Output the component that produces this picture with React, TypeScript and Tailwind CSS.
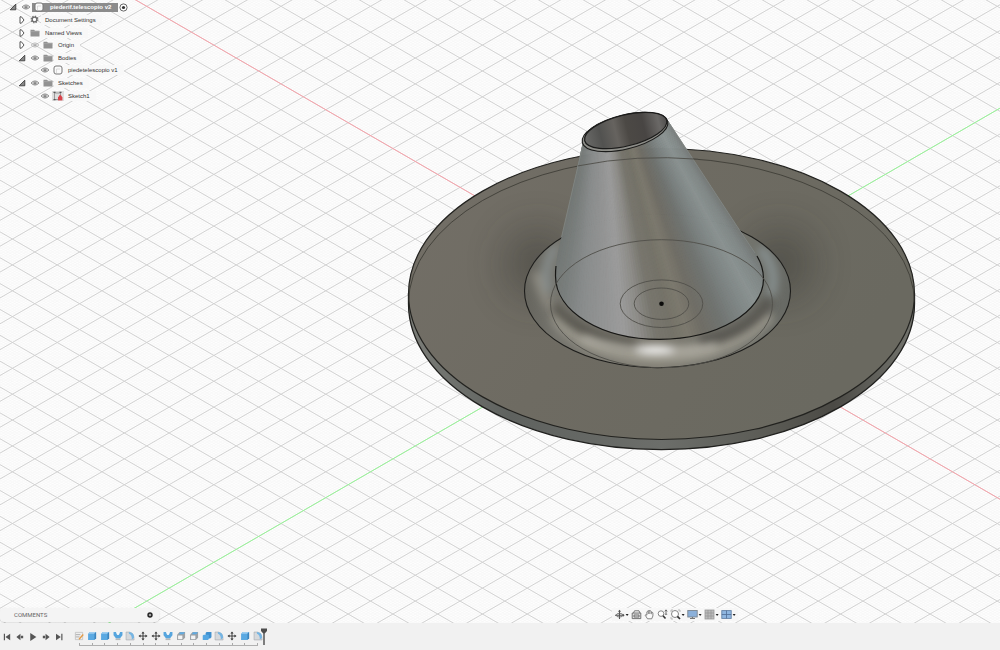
import { useState } from 'react';
import type { ReactNode } from 'react';

const W = 1000;
const H = 623;
const CX = 661.5;
const CY = 303.7;
const ISO = 0.5777;
const MAJOR = 25.86;

/* ---------- GRID ---------- */

// both line families of the ground plane, step = vertical distance between lines
const gridPath = (step: number) => {
  let d = '';
  const reach = Math.ceil((H + W * ISO) / step) + 2;
  for (let k = -reach; k <= reach; k++) {
    for (const s of [ISO, -ISO]) {
      const y0 = CY - s * CX + k * step;
      const y1 = y0 + s * W;
      if (Math.max(y0, y1) < 0 || Math.min(y0, y1) > H) continue;
      d += `M0 ${y0.toFixed(2)}L${W} ${y1.toFixed(2)}`;
    }
  }
  return d;
};

const minorGrid = gridPath(MAJOR / 10);
const majorGrid = gridPath(MAJOR);

/* ---------- CONE ---------- */

const coneStops: [number, number[]][] = [
  [0, [114, 118, 116]],
  [0.07, [122, 127, 125]],
  [0.15, [138, 141, 141]],
  [0.23, [147, 148, 148]],
  [0.3, [156, 156, 156]],
  [0.36, [142, 141, 137]],
  [0.42, [120, 118, 110]],
  [0.48, [117, 115, 105]],
  [0.54, [124, 121, 110]],
  [0.6, [112, 110, 102]],
  [0.68, [112, 115, 112]],
  [0.77, [126, 133, 132]],
  [0.86, [139, 147, 146]],
  [0.94, [129, 136, 135]],
  [1, [116, 120, 117]],
];

const coneColor = (t: number) => {
  const i = Math.max(1, coneStops.findIndex(([p]) => p >= t));
  const [p0, a] = coneStops[i - 1];
  const [p1, b] = coneStops[i];
  const f = (t - p0) / (p1 - p0);
  return `rgb(${a.map((v, j) => Math.round(v + (b[j] - v) * f)).join(',')})`;
};

const conePoint = (t: number, ext: number) => {
  const px = 581 + 88 * t;
  const py = 146 - 27 * t;
  const bx = 555 + 209 * t;
  return `${(px + (bx - px) * ext).toFixed(1)},${(py + (265 - py) * ext).toFixed(1)}`;
};

const SLICES = 90;
const coneSlices = Array.from({ length: SLICES }, (_, i) => {
  const a = i / SLICES;
  const b = (i + 1) / SLICES;
  return {
    points: `${conePoint(a, -0.3)} ${conePoint(b, -0.3)} ${conePoint(b, 1.8)} ${conePoint(a, 1.8)}`,
    color: coneColor((a + b) / 2),
  };
});

const CONE_OUTLINE =
  'M582.7 143L561.5 237C558 251 555.5 262 555.5 276C555.5 312 602 339.3 659.5 339.3C717 339.3 763.5 312 763.5 279C763.5 270 760 261 755 253L739.5 230L691.7 157L667.5 120Z';

function Viewport() {
  return (
    <svg
      className="absolute inset-0 h-full w-full"
      viewBox={`0 0 ${W} ${H}`}
      preserveAspectRatio="xMidYMid slice"
      role="img"
      aria-label="3D model viewport"
    >
      <defs>
        <linearGradient id="face" x1="0" y1="0" x2="1" y2="0.4">
          <stop offset="0" stopColor="#736f67" />
          <stop offset="0.5" stopColor="#6e6b62" />
          <stop offset="1" stopColor="#6a6960" />
        </linearGradient>
        <linearGradient id="side" x1="0" y1="0" x2="1" y2="0">
          <stop offset="0" stopColor="#7b7d78" />
          <stop offset="0.2" stopColor="#5f625f" />
          <stop offset="0.5" stopColor="#6c6e6a" />
          <stop offset="0.72" stopColor="#5a5a54" />
          <stop offset="0.84" stopColor="#4b4a45" />
          <stop offset="1" stopColor="#74756f" />
        </linearGradient>
        <linearGradient id="ring" x1="0" y1="0" x2="1" y2="0">
          <stop offset="0" stopColor="#66655e" />
          <stop offset="0.12" stopColor="#75746d" />
          <stop offset="0.5" stopColor="#7f7c72" />
          <stop offset="0.85" stopColor="#72736c" />
          <stop offset="1" stopColor="#666863" />
        </linearGradient>
        <linearGradient id="bore" x1="0" y1="0" x2="1" y2="0">
          <stop offset="0" stopColor="#6a6a68" />
          <stop offset="0.2" stopColor="#525250" />
          <stop offset="0.38" stopColor="#66635f" />
          <stop offset="0.52" stopColor="#4c4945" />
          <stop offset="0.72" stopColor="#484543" />
          <stop offset="0.9" stopColor="#6a6866" />
          <stop offset="1" stopColor="#4f4e4d" />
        </linearGradient>
        <filter id="soft" filterUnits="userSpaceOnUse" x="500" y="200" width="320" height="200">
          <feGaussianBlur stdDeviation="4" />
        </filter>
        <filter id="shade" filterUnits="userSpaceOnUse" x="400" y="140" width="520" height="320">
          <feGaussianBlur stdDeviation="19" />
        </filter>
        <clipPath id="faceClip"><ellipse cx="661.5" cy="294" rx="253" ry="145.5" /></clipPath>
        <clipPath id="ringClip"><ellipse cx="657.5" cy="291" rx="133" ry="76.7" /></clipPath>
        <clipPath id="coneClip">
          <path d={CONE_OUTLINE} />
          <ellipse cx="625" cy="132" rx="44" ry="17" transform="rotate(-14 625 132)" />
        </clipPath>
      </defs>

      <rect width={W} height={H} fill="#fefefe" />
      <path d={minorGrid} stroke="#f5f5f5" strokeWidth="0.6" fill="none" />
      <path d={majorGrid} stroke="#d2d2d2" strokeWidth="1" fill="none" />
      <path d={`M${CX} ${CY}L0 ${CY - CX * ISO}M${CX} ${CY}L${W} ${CY + (W - CX) * ISO}`} stroke="#f9a3ab" />
      <path d={`M${CX} ${CY}L0 ${CY + CX * ISO}M${CX} ${CY}L${W} ${CY - (W - CX) * ISO}`} stroke="#97f797" />

      {/* base disc */}
      <path
        d="M408.5 294V303.7A253 146 0 0 0 914.5 303.7V294Z"
        fill="url(#side)"
        stroke="#20201e"
        strokeWidth="1.3"
      />
      <ellipse cx="661.5" cy="294" rx="253" ry="145.5" fill="url(#face)" stroke="#22221f" strokeWidth="1.2" />
      <g clipPath="url(#faceClip)">
        <ellipse cx="538" cy="264" rx="34" ry="36" fill="#33322d" opacity="0.4" filter="url(#shade)" />
        <ellipse cx="780" cy="264" rx="34" ry="36" fill="#33322d" opacity="0.4" filter="url(#shade)" />
        <ellipse cx="661.5" cy="303.7" rx="253" ry="146" fill="none" stroke="#3f3e38" strokeWidth="0.9" />
      </g>

      {/* fillet around the cone */}
      <ellipse cx="657.5" cy="291" rx="133" ry="76.7" fill="url(#ring)" />
      <g clipPath="url(#ringClip)" fill="none">
        <g filter="url(#soft)">
          <path d="M536 272Q542 304 575 335" stroke="#8f8c82" strokeWidth="8" />
          <path d="M556 246Q541 268 549 292" stroke="#858b8a" strokeWidth="9" />
          <path d="M760 248Q780 272 770 296" stroke="#879090" strokeWidth="9" />
          <path d="M556 316C572 342 615 357 660 357S744 343 770 314" stroke="#99968b" strokeWidth="13" />
        </g>
        <g filter="url(#soft)">
          <path d="M554 305C574 330 608 342 636 344" stroke="#55524c" strokeWidth="9" />
          <path d="M770 300C752 326 728 336 700 341" stroke="#575550" strokeWidth="11" />
        </g>
        <g filter="url(#soft)">
          <path d="M582 338Q620 351 662 351T716 345" stroke="#b5b2a9" strokeWidth="6" />
          <ellipse cx="655" cy="350" rx="19" ry="4" fill="#ffffff" />
        </g>
      </g>
      <ellipse cx="657.5" cy="291" rx="133" ry="76.7" fill="none" stroke="#1d1d1b" strokeWidth="1.1" />

      {/* cone */}
      <g clipPath="url(#coneClip)">
        {coneSlices.map((s, i) => (
          <polygon key={i} points={s.points} fill={s.color} stroke={s.color} strokeWidth="0.8" />
        ))}
      </g>
      <path d="M582.7 146L561.5 237" stroke="#858985" strokeWidth="0.7" fill="none" />
      <path d="M667.8 121L691.7 157L739.5 230L755 253" stroke="#858b88" strokeWidth="0.7" fill="none" />
      <path
        d="M556 266C555.5 270 555.5 272 555.5 276C555.5 312 602 339.3 659.5 339.3C717 339.3 763.5 312 763.5 279C763.5 270 760 261 757 256"
        stroke="#171715"
        strokeWidth="1.2"
        fill="none"
      />
      <ellipse cx="625" cy="132" rx="44" ry="17" transform="rotate(-14 625 132)" fill="#8d8d88" stroke="#1b1b1a" strokeWidth="1.1" />
      <ellipse cx="625.7" cy="130.5" rx="42.3" ry="15.5" transform="rotate(-14 625.7 130.5)" fill="url(#bore)" stroke="#1b1b1a" strokeWidth="1.2" />

      {/* sketch curves showing through the body */}
      <g fill="none" stroke="#504f49" strokeWidth="0.9">
        <path d="M578 165.9A253 146 0 0 1 698 159.2" />
        <ellipse cx={CX} cy={CY} rx="111" ry="64" />
        <ellipse cx={CX} cy={CY} rx="41.3" ry="23.8" />
        <ellipse cx={CX} cy={CY} rx="27.3" ry="15.7" />
      </g>
      <circle cx={CX} cy={CY} r="2.3" fill="#0c0c0b" />
    </svg>
  );
}

/* ---------- BROWSER TREE ICONS ---------- */

const Arrow = ({ open }: { open: boolean }) => (
  <svg viewBox="0 0 8 8" className="h-2 w-2">
    {open ? (
      <path d="M6.8 1.2V6.8H1.2Z" fill="#888" stroke="#333" strokeWidth="0.8" />
    ) : (
      <path d="M2 0.8V7.2L3.4 7.2L6 4L3.4 0.8Z" fill="#fff" stroke="#444" strokeWidth="0.9" />
    )}
  </svg>
);

const Eye = ({ off }: { off?: boolean }) => (
  <svg viewBox="0 0 10 8" className={off ? 'h-2 w-[10px] opacity-50' : 'h-2 w-[10px]'}>
    <path d="M1 4Q5 -0.2 9 4Q5 8.2 1 4Z" fill="#e2e2e2" stroke="#888" strokeWidth="0.9" />
    <circle cx="5" cy="4" r="1.6" fill="#7c7c7c" />
    <circle cx="5" cy="3.8" r="0.5" fill="#ddd" />
  </svg>
);

const Folder = () => (
  <svg viewBox="0 0 10 8" className="h-2 w-[10px]">
    <path d="M0.5 0.8H4L5 1.8H9.5V7.6H0.5Z" fill="#929292" />
    <path d="M0.5 2.6H9.5" stroke="#b5b5b5" strokeWidth="0.5" />
  </svg>
);

const Gear = () => (
  <svg viewBox="0 0 10 10" className="h-[9px] w-[9px]">
    <circle cx="5" cy="5" r="3.7" fill="none" stroke="#777" strokeWidth="1.4" strokeDasharray="1.5 1.4" />
    <circle cx="5" cy="5" r="2.6" fill="#fff" stroke="#6c6c6c" strokeWidth="1.5" />
  </svg>
);

const BodyIcon = () => (
  <svg viewBox="0 0 10 10" className="h-[10px] w-[10px]">
    <rect x="1" y="1" width="8" height="8" rx="2" fill="#fafafa" stroke="#777" />
    <path d="M3.5 8V4H7" fill="none" stroke="#ccc" strokeWidth="0.7" />
  </svg>
);

const SketchIcon = () => (
  <svg viewBox="0 0 12 10" className="h-[10px] w-3 bg-[#dedede]">
    <path d="M2.5 1.5V8.5H6M2.5 2H8.5V5" fill="none" stroke="#8a8a8a" strokeWidth="0.8" />
    <path d="M1.5 1.3H3.5M7.5 1.3H9.5M1.5 8.7H3.5" stroke="#555" strokeWidth="1.2" />
    <path d="M6 6H10.4V9.4H6Z" fill="#d8434a" />
    <path d="M7 6V5Q8.2 3.4 9.4 5V6" fill="#d8434a" stroke="#d8434a" strokeWidth="0.6" />
  </svg>
);

type TreeRow = { label: string; indent: string; icons: ReactNode[] };

const rows: TreeRow[] = [
  { label: 'Document Settings', indent: 'ml-[15px]', icons: [<Arrow open={false} />, <Gear />] },
  { label: 'Named Views', indent: 'ml-[15px]', icons: [<Arrow open={false} />, <Folder />] },
  { label: 'Origin', indent: 'ml-[15px]', icons: [<Arrow open={false} />, <Eye off />, <Folder />] },
  { label: 'Bodies', indent: 'ml-[15px]', icons: [<Arrow open />, <Eye />, <Folder />] },
  { label: 'piedetelescopio v1', indent: 'ml-[38px]', icons: [<Eye />, <BodyIcon />] },
  { label: 'Sketches', indent: 'ml-[15px]', icons: [<Arrow open />, <Eye />, <Folder />] },
  { label: 'Sketch1', indent: 'ml-[38px]', icons: [<Eye />, <SketchIcon />] },
];

const Cell = ({ children }: { children: ReactNode }) => (
  <span className="flex w-[13px] shrink-0 items-center justify-center">{children}</span>
);

function BrowserTree() {
  return (
    <nav aria-label="Browser" className="grid h-[102px] auto-rows-fr justify-items-start pt-px text-[6px] leading-none text-[#333]">
      <div className="ml-[6px] flex items-center">
        <Cell><Arrow open /></Cell>
        <Cell><Eye /></Cell>
        <button className="flex h-[9px] items-center bg-[#8c8c8c] pr-[7px] font-bold text-white">
          <Cell><BodyIcon /></Cell>
          <span className="pl-[5px]">piederif.telescopio v2</span>
        </button>
        <svg viewBox="0 0 10 10" className="ml-[1px] h-[9px] w-[9px]">
          <circle cx="5" cy="5" r="4" fill="#fff" stroke="#444" strokeWidth="0.9" />
          <circle cx="5" cy="5" r="1.8" fill="#333" />
        </svg>
      </div>
      {rows.map(r => (
        <button key={r.label} className={`flex items-center ${r.indent}`}>
          {r.icons.map((icon, i) => <Cell key={i}>{icon}</Cell>)}
          <span className="bg-[#f8f8f8] py-[2px] pr-[6px] pl-1">{r.label}</span>
        </button>
      ))}
    </nav>
  );
}

/* ---------- NAVIGATION BAR ---------- */

const navIcons: { name: string; menu?: boolean; art: ReactNode }[] = [
  {
    name: 'Orbit', menu: true,
    art: <><path d="M1 6.2H10M5.5 1.5V10" stroke="#555" strokeWidth="1.1" /><ellipse cx="5.5" cy="6.2" rx="3.3" ry="1.8" fill="none" stroke="#666" strokeWidth="0.8" /><path d="M4 2.7L5.5 0.8L7 2.7ZM8.8 4.5L10.6 6.2L8.8 7.9Z" fill="#555" /></>,
  },
  {
    name: 'Look At',
    art: <><path d="M1.2 4H9.8V9.6H1.2Z" fill="#ddd" stroke="#666" strokeWidth="0.9" /><path d="M2.5 4L3.5 1.8H8L9 4M3 6H8V8H3Z" fill="none" stroke="#666" strokeWidth="0.9" /></>,
  },
  {
    name: 'Pan',
    art: <path d="M3.5 9.8L1.2 6.2Q1.4 5 2.9 6.2V2.8Q3.6 1.8 4.3 2.8V1.7Q5 0.7 5.8 1.7V2.2Q6.6 1.3 7.3 2.4V3.5Q8.2 2.8 8.9 3.8V7L7.7 9.8ZM4.3 2.8V5M5.8 2.2V5M7.3 3.5V5.2" fill="#fafafa" stroke="#666" strokeWidth="0.8" />,
  },
  {
    name: 'Zoom',
    art: <><circle cx="4" cy="4.6" r="2.8" fill="#fff" stroke="#777" strokeWidth="0.9" /><path d="M6 6.8L8.5 9.5" stroke="#333" strokeWidth="1.6" /><path d="M9 1V5M7.8 2.4L9 0.8L10.2 2.4M7.8 5.3H10.2" stroke="#555" strokeWidth="0.8" fill="none" /></>,
  },
  {
    name: 'Fit', menu: true,
    art: <><path d="M1 3V1H3M8 1H10V3M1 8V10H3" fill="none" stroke="#aaa" strokeWidth="0.8" /><circle cx="5" cy="5" r="3.5" fill="#fff" stroke="#777" strokeWidth="0.9" /><path d="M7.4 7.4L10 10" stroke="#333" strokeWidth="1.7" /></>,
  },
  {
    name: 'Display Settings', menu: true,
    art: <><rect x="0.8" y="1.5" width="9.4" height="6.5" fill="#8bb0da" stroke="#7b858f" strokeWidth="0.9" /><path d="M3 9.5H8M5.5 8V9.5" stroke="#777" strokeWidth="1.2" /></>,
  },
  {
    name: 'Grid and Snaps', menu: true,
    art: <><rect x="1" y="1" width="9" height="9" fill="#bbb" stroke="#999" strokeWidth="0.8" /><path d="M1 4H10M1 7H10M4 1V10M7 1V10" stroke="#969696" strokeWidth="0.7" /></>,
  },
  {
    name: 'Viewports', menu: true,
    art: <><rect x="0.8" y="1.6" width="9.4" height="7.8" fill="#8fb6e0" stroke="#6482a5" strokeWidth="0.9" /><path d="M5.5 1.6V9.4M0.8 5.5H10.2" stroke="#4f6d95" strokeWidth="0.8" /></>,
  },
];

function NavBar() {
  return (
    <div role="toolbar" aria-label="Navigation" className="mr-[262px] flex h-[13px] items-center gap-[2px] bg-[#f7f7f7] px-[2px]">
      {navIcons.map(n => (
        <button key={n.name} aria-label={n.name} className="flex items-center">
          <svg viewBox="0 0 11 11" className="h-[11px] w-[11px]">{n.art}</svg>
          {n.menu && (
            <svg viewBox="0 0 4 4" className="h-1 w-1"><path d="M0.6 0.9H3.6L2.1 2.9Z" fill="#222" /></svg>
          )}
        </button>
      ))}
    </div>
  );
}

/* ---------- TIMELINE ---------- */

const playback: [string, string][] = [
  ['Go to start', 'M2 2H3.3V9H2ZM9 2V9L3.8 5.5Z'],
  ['Step back', 'M6 2V9L1.5 5.5ZM6.5 4H9V7H6.5Z'],
  ['Play', 'M2.5 1L9.2 5.5L2.5 10Z'],
  ['Step forward', 'M5 2V9L9.5 5.5ZM2 4H4.5V7H2Z'],
  ['Go to end', 'M8 2H9.3V9H8ZM2.2 2V9L7.5 5.5Z'],
];

const featureArt: Record<string, ReactNode> = {
  sketch: (
    <>
      <path d="M1.5 1.5H9.5V9.5H1.5Z" fill="#eee" stroke="#bbb" strokeWidth="0.8" />
      <path d="M2 4H7M2 6.5H6" stroke="#999" strokeWidth="0.8" />
      <path d="M10.2 3.8L6.5 8L5.5 9.3" stroke="#e39a45" strokeWidth="1.4" fill="none" />
    </>
  ),
  extrude: (
    <>
      <path d="M1.2 3L3 1H10V8L8 10H1.2Z" fill="#5aa9e2" />
      <path d="M1.2 3L3 1H10L8.2 3Z" fill="#9dcdf0" />
      <path d="M8.2 3L10 1V8L8.2 10Z" fill="#3c85be" />
    </>
  ),
  loft: (
    <>
      <path d="M0.6 1H3.4L4.4 4.2H6.6L7.6 1H10.4V4.8L7.6 8.2H3.4L0.6 4.8Z" fill="#56a5de" />
      <path d="M3.6 1H7.4L6.4 4H4.6Z" fill="#f2f7fb" />
      <path d="M2.8 8.2H8.2V10H2.8Z" fill="#b4b8bb" />
    </>
  ),
  fillet: (
    <>
      <path d="M1.2 1.2H5Q10 2 10 9.8H1.2Z" fill="#d6d9dc" stroke="#a6aaae" strokeWidth="0.7" />
      <path d="M4.3 1.2Q10 1.5 10 7.5L7.5 9.5Q7.8 4 4.3 3Z" fill="#74b5e4" />
    </>
  ),
  move: (
    <>
      <path d="M5.5 2V9M2 5.5H9" stroke="#333" strokeWidth="1" />
      <path d="M5.5 0.5L7.2 2.8H3.8ZM5.5 10.5L7.2 8.2H3.8ZM0.5 5.5L2.8 3.8V7.2ZM10.5 5.5L8.2 3.8V7.2Z" fill="#333" />
    </>
  ),
  shell: (
    <>
      <path d="M1.2 4L4 1.2H10V7.5L7.5 10H1.2Z" fill="#9da1a4" />
      <path d="M3 3.7L4.5 1.4H10L8 3.7Z" fill="#5fabe2" />
      <path d="M2.3 5H7V9H2.3Z" fill="#f4f4f4" />
    </>
  ),
  combine: (
    <>
      <path d="M4 2.2L5 1.2H10.4V7L9 8.2H4Z" fill="#3f90cf" />
      <path d="M0.8 5L2 4H7.5V9L6.3 10H0.8Z" fill="#55a7e2" />
    </>
  ),
};

const features = [
  'sketch', 'extrude', 'extrude', 'loft', 'fillet', 'move', 'move', 'loft',
  'shell', 'shell', 'combine', 'fillet', 'move', 'extrude', 'fillet',
];

function Timeline() {
  const [current, setCurrent] = useState(features.length - 1);

  return (
    <footer className="flex h-[27px] shrink-0 items-start bg-[#f1f1f1] pt-1">
      <div className="flex items-center pr-2">
        {playback.map(([name, d]) => (
          <button key={name} aria-label={name} className="flex h-5 w-[13px] items-center justify-center">
            <svg viewBox="0 0 11 11" className="h-[10px] w-[10px]"><path d={d} fill="#555" /></svg>
          </button>
        ))}
      </div>
      <div className="grid w-[191px] grid-cols-15">
        {features.map((f, i) => (
          <button
            key={i}
            aria-label={`${f} ${i + 1}`}
            aria-current={i === current}
            onClick={() => setCurrent(i)}
            className="flex h-[18px] flex-col items-center justify-end"
          >
            <svg viewBox="0 0 11 11" className="h-[10px] w-[10px]">{featureArt[f]}</svg>
            <span className="mt-[2px] h-[2px] w-px bg-[#aaa]" />
          </button>
        ))}
        <div className="col-span-15 mx-[6px] h-px bg-[#b0b0b0]" />
      </div>
      <svg viewBox="0 0 8 18" className="-ml-1 h-[18px] w-2">
        <path d="M1 1.5H7V4L4.7 6.5V18H3.3V6.5L1 4Z" fill="#4d4d4d" />
      </svg>
    </footer>
  );
}

export default function App() {
  return (
    <div className="flex h-screen flex-col overflow-hidden bg-[#f1f1f1] font-['Liberation_Sans',sans-serif]">
      <main className="relative flex min-h-0 flex-1 flex-col overflow-hidden">
        <Viewport />
        <div className="relative flex flex-1 flex-col justify-between">
          <BrowserTree />
          <div className="flex items-start justify-between pb-px">
            <section className="flex h-[14px] w-[159px] items-center justify-between rounded-sm bg-[#f4f4f4] pr-[6px] pl-[14px] shadow-sm">
              <h2 className="font-['Roboto',sans-serif] text-[6px] leading-none text-[#666]">COMMENTS</h2>
              <button aria-label="Add comment">
                <svg viewBox="0 0 6 6" className="h-[6px] w-[6px]">
                  <circle cx="3" cy="3" r="2.7" fill="#222" />
                  <path d="M3 1.8V4.2M1.8 3H4.2" stroke="#fff" strokeWidth="0.7" />
                </svg>
              </button>
            </section>
            <NavBar />
          </div>
        </div>
      </main>
      <Timeline />
    </div>
  );
}
